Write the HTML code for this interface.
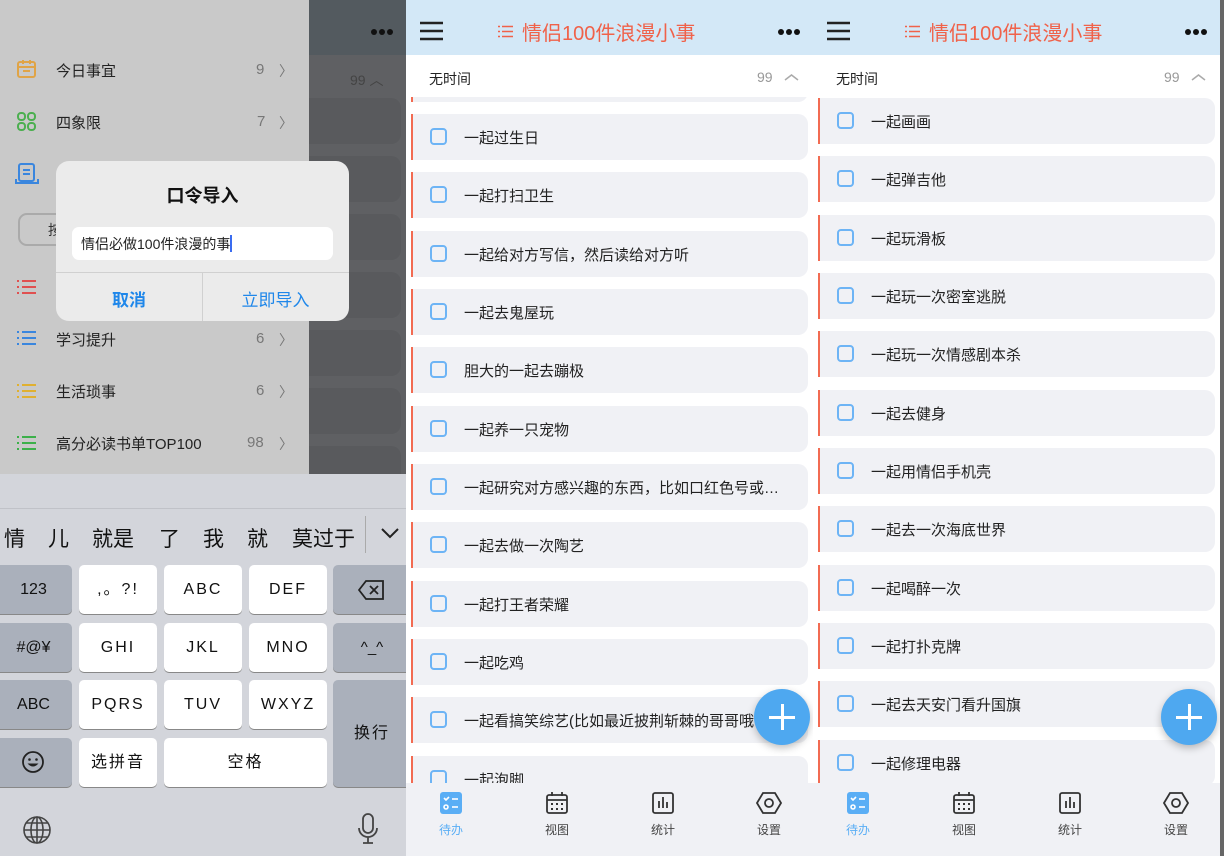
<!DOCTYPE html>
<html><head><meta charset="utf-8"><style>
*{margin:0;padding:0;box-sizing:border-box}
body{width:1224px;height:856px;overflow:hidden;position:relative;font-family:"Liberation Sans","Noto Sans CJK SC",sans-serif;background:#fff}
.a{position:absolute}
.panel{position:absolute;top:0;height:856px;overflow:hidden;background:#fff}
.hdr{position:absolute;left:0;top:0;width:100%;height:55px;background:#d3e8f7}
.title{position:absolute;top:17px;font-size:20px;color:#f0624a;white-space:nowrap}
.card{position:absolute;left:5px;width:397px;height:46px;background:#f0f1f5;border-radius:0 10px 10px 0;border-left:2px solid #f26b52}
.card .cb{position:absolute;left:17px;top:14px;width:17px;height:17px;border:2px solid #6db4f5;border-radius:4px}
.card .t{position:absolute;left:51px;top:13px;font-size:15px;color:#222;white-space:nowrap;width:330px;overflow:hidden;text-overflow:ellipsis}
.tab{position:absolute;top:783px;left:0;width:100%;height:73px;background:#f0f1f5}
.tab .l{position:absolute;top:38px;font-size:12px;color:#444;width:40px;text-align:center}
.fab{position:absolute;width:56px;height:56px;border-radius:50%;background:#4ea8f0;box-shadow:0 3px 8px rgba(0,0,0,.25);top:689px}
.fab:before{content:"";position:absolute;left:15px;top:27px;width:26px;height:2.5px;background:#fff}
.fab:after{content:"";position:absolute;left:27px;top:15px;width:2.5px;height:26px;background:#fff}
.key{position:absolute;height:49px;background:#fff;border-radius:5px;box-shadow:0 1px 0 #888;font-size:16px;text-align:center;line-height:49px;color:#111;letter-spacing:2px}
.gk{background:#aab0bb}
.side{position:absolute;left:56px;font-size:15px;color:#222}
.num{position:absolute;font-size:15px;color:#777}
.chev{position:absolute;font-size:14px;color:#777}
.sec{position:absolute;left:0;top:55px;width:100%;height:42px;background:#fff}
</style></head><body>

<!-- LEFT PANEL -->
<div class="panel" style="left:0;width:406px;background:#c9c9c9">
  <div class="a" style="left:309px;top:0;width:97px;height:474px;background:#5f6063"></div>
  <div class="a" style="left:309px;top:0;width:97px;height:55px;background:#535a5f"></div>
  <svg class="a" style="left:370px;top:28px" width="24" height="8"><g fill="#111"><circle cx="4" cy="4" r="3"/><circle cx="12" cy="4" r="3"/><circle cx="20" cy="4" r="3"/></g></svg>
  <div class="a" style="left:350px;top:70px;color:#444;font-size:14px">99 ︿</div>
  <div class="a" style="left:309px;top:98px;width:92px;height:46px;background:#595a5d;border-radius:0 10px 10px 0"></div>
  <div class="a" style="left:309px;top:156px;width:92px;height:46px;background:#595a5d;border-radius:0 10px 10px 0"></div>
  <div class="a" style="left:309px;top:214px;width:92px;height:46px;background:#595a5d;border-radius:0 10px 10px 0"></div>
  <div class="a" style="left:309px;top:272px;width:92px;height:46px;background:#595a5d;border-radius:0 10px 10px 0"></div>
  <div class="a" style="left:309px;top:330px;width:92px;height:46px;background:#595a5d;border-radius:0 10px 10px 0"></div>
  <div class="a" style="left:309px;top:388px;width:92px;height:46px;background:#595a5d;border-radius:0 10px 10px 0"></div>
  <div class="a" style="left:309px;top:446px;width:92px;height:28px;background:#595a5d;border-radius:0 10px 0 0"></div>

  <svg class="a" style="left:16px;top:59px" width="22" height="20"><rect x="2" y="3" width="17" height="15" rx="2" fill="none" stroke="#e0a447" stroke-width="2"/><line x1="2" y1="8" x2="19" y2="8" stroke="#e0a447" stroke-width="2"/><line x1="7" y1="1" x2="7" y2="5" stroke="#e0a447" stroke-width="2"/><line x1="14" y1="1" x2="14" y2="5" stroke="#e0a447" stroke-width="2"/><line x1="7" y1="12" x2="14" y2="12" stroke="#e0a447" stroke-width="2"/></svg>
  <div class="side" style="top:60px">今日事宜</div><div class="num" style="left:256px;top:61px">9</div><div class="chev" style="left:279px;top:61px">〉</div>
  <svg class="a" style="left:17px;top:112px" width="20" height="20"><g fill="none" stroke="#4caf50" stroke-width="2"><rect x="1" y="1" width="7" height="7" rx="3"/><rect x="11" y="1" width="7" height="7" rx="3"/><rect x="1" y="11" width="7" height="7" rx="3"/><rect x="11" y="11" width="7" height="7" rx="3"/></g></svg>
  <div class="side" style="top:112px">四象限</div><div class="num" style="left:257px;top:113px">7</div><div class="chev" style="left:279px;top:113px">〉</div>
  <svg class="a" style="left:15px;top:162px" width="24" height="24"><rect x="4" y="2" width="15" height="17" rx="2" fill="none" stroke="#3a86de" stroke-width="2"/><line x1="8" y1="8" x2="15" y2="8" stroke="#3a86de" stroke-width="2"/><line x1="8" y1="12" x2="15" y2="12" stroke="#3a86de" stroke-width="2"/><path d="M1 17v4h22v-4" fill="none" stroke="#3a86de" stroke-width="2"/></svg>
  <div class="a" style="left:18px;top:213px;width:60px;height:33px;border:2px solid #aaa;border-radius:9px"></div>
  <div class="a" style="left:48px;top:220px;font-size:14px;color:#333">按</div>
  <svg class="a" style="left:17px;top:279px" width="20" height="16"><g stroke="#e05050" stroke-width="2"><line x1="0" y1="2" x2="2" y2="2"/><line x1="5" y1="2" x2="19" y2="2"/><line x1="0" y1="8" x2="2" y2="8"/><line x1="5" y1="8" x2="19" y2="8"/><line x1="0" y1="14" x2="2" y2="14"/><line x1="5" y1="14" x2="19" y2="14"/></g></svg>
  <svg class="a" style="left:17px;top:330px" width="20" height="16"><g stroke="#3a86de" stroke-width="2"><line x1="0" y1="2" x2="2" y2="2"/><line x1="5" y1="2" x2="19" y2="2"/><line x1="0" y1="8" x2="2" y2="8"/><line x1="5" y1="8" x2="19" y2="8"/><line x1="0" y1="14" x2="2" y2="14"/><line x1="5" y1="14" x2="19" y2="14"/></g></svg>
  <div class="side" style="top:329px">学习提升</div><div class="num" style="left:256px;top:330px">6</div><div class="chev" style="left:279px;top:330px">〉</div>
  <svg class="a" style="left:17px;top:383px" width="20" height="16"><g stroke="#e0b030" stroke-width="2"><line x1="0" y1="2" x2="2" y2="2"/><line x1="5" y1="2" x2="19" y2="2"/><line x1="0" y1="8" x2="2" y2="8"/><line x1="5" y1="8" x2="19" y2="8"/><line x1="0" y1="14" x2="2" y2="14"/><line x1="5" y1="14" x2="19" y2="14"/></g></svg>
  <div class="side" style="top:381px">生活琐事</div><div class="num" style="left:256px;top:382px">6</div><div class="chev" style="left:279px;top:382px">〉</div>
  <svg class="a" style="left:17px;top:435px" width="20" height="16"><g stroke="#3cb04a" stroke-width="2"><line x1="0" y1="2" x2="2" y2="2"/><line x1="5" y1="2" x2="19" y2="2"/><line x1="0" y1="8" x2="2" y2="8"/><line x1="5" y1="8" x2="19" y2="8"/><line x1="0" y1="14" x2="2" y2="14"/><line x1="5" y1="14" x2="19" y2="14"/></g></svg>
  <div class="side" style="top:433px">高分必读书单TOP100</div><div class="num" style="left:247px;top:434px">98</div><div class="chev" style="left:279px;top:434px">〉</div>

  <!-- dialog -->
  <div class="a" style="left:56px;top:161px;width:293px;height:160px;background:#ebebeb;border-radius:13px"></div>
  <div class="a" style="left:56px;top:182px;width:293px;text-align:center;font-size:18px;font-weight:bold;color:#111">口令导入</div>
  <div class="a" style="left:72px;top:227px;width:261px;height:33px;background:#fff;border-radius:7px;font-size:14px;padding:7px 0 0 9px;color:#222">情侣必做100件浪漫的事<span style="display:inline-block;width:2px;height:17px;background:#3a6cf0;vertical-align:-3px"></span></div>
  <div class="a" style="left:56px;top:272px;width:293px;height:1px;background:#d0d0d0"></div>
  <div class="a" style="left:202px;top:272px;width:1px;height:49px;background:#d0d0d0"></div>
  <div class="a" style="left:56px;top:286px;width:146px;text-align:center;font-size:17px;font-weight:bold;color:#1f87ea">取消</div>
  <div class="a" style="left:202px;top:286px;width:147px;text-align:center;font-size:17px;color:#1f87ea">立即导入</div>

  <!-- keyboard -->
  <div class="a" style="left:0;top:474px;width:406px;height:382px;background:#d3d5db"></div>
  <div class="a" style="left:0;top:508px;width:406px;height:1px;background:#c0c2c8"></div>
  <div class="a" style="left:4px;top:523px;font-size:21px;color:#111">情</div>
  <div class="a" style="left:48px;top:523px;font-size:21px;color:#111">儿</div>
  <div class="a" style="left:92px;top:523px;font-size:21px;color:#111">就是</div>
  <div class="a" style="left:159px;top:523px;font-size:21px;color:#111">了</div>
  <div class="a" style="left:203px;top:523px;font-size:21px;color:#111">我</div>
  <div class="a" style="left:247px;top:523px;font-size:21px;color:#111">就</div>
  <div class="a" style="left:292px;top:523px;font-size:21px;color:#111">莫过于</div>
  <div class="a" style="left:365px;top:516px;width:1px;height:37px;background:#aaa"></div>
  <svg class="a" style="left:380px;top:526px" width="20" height="14"><path d="M2 3l8 8 8-8" fill="none" stroke="#222" stroke-width="2"/></svg>

  <div class="key gk" style="left:-5px;top:565px;width:77px;letter-spacing:0">123</div>
  <div class="key" style="left:79px;top:565px;width:78px">,。?!</div>
  <div class="key" style="left:164px;top:565px;width:78px">ABC</div>
  <div class="key" style="left:249px;top:565px;width:78px">DEF</div>
  <div class="key gk" style="left:333px;top:565px;width:78px"></div>
  <svg class="a" style="left:358px;top:579px" width="28" height="22"><path d="M8 2h17v18H8L1 11z" fill="none" stroke="#222" stroke-width="1.8"/><path d="M12 7l8 8M20 7l-8 8" stroke="#222" stroke-width="1.8"/></svg>
  <div class="key gk" style="left:-5px;top:623px;width:77px;letter-spacing:0">#@¥</div>
  <div class="key" style="left:79px;top:623px;width:78px">GHI</div>
  <div class="key" style="left:164px;top:623px;width:78px">JKL</div>
  <div class="key" style="left:249px;top:623px;width:78px">MNO</div>
  <div class="key gk" style="left:333px;top:623px;width:78px;letter-spacing:0;font-size:15px">^_^</div>
  <div class="key gk" style="left:-5px;top:680px;width:77px;letter-spacing:0">ABC</div>
  <div class="key" style="left:79px;top:680px;width:78px">PQRS</div>
  <div class="key" style="left:164px;top:680px;width:78px">TUV</div>
  <div class="key" style="left:249px;top:680px;width:78px">WXYZ</div>
  <div class="key gk" style="left:333px;top:680px;width:78px;height:107px;line-height:107px">换行</div>
  <div class="key gk" style="left:-5px;top:738px;width:77px"></div>
  <svg class="a" style="left:21px;top:750px" width="24" height="24"><circle cx="12" cy="12" r="10" fill="none" stroke="#222" stroke-width="1.8"/><circle cx="8.5" cy="9.5" r="1.3" fill="#222"/><circle cx="15.5" cy="9.5" r="1.3" fill="#222"/><path d="M6.5 13.5q5.5 6 11 0z" fill="#222"/></svg>
  <div class="key" style="left:79px;top:738px;width:78px">选拼音</div>
  <div class="key" style="left:164px;top:738px;width:163px">空格</div>
  <svg class="a" style="left:22px;top:815px" width="30" height="30"><g fill="none" stroke="#444" stroke-width="1.6"><circle cx="15" cy="15" r="13"/><ellipse cx="15" cy="15" rx="6" ry="13"/><line x1="2" y1="15" x2="28" y2="15"/><line x1="15" y1="2" x2="15" y2="28"/><path d="M4 8h22M4 22h22"/></g></svg>
  <svg class="a" style="left:356px;top:813px" width="24" height="32"><g fill="none" stroke="#444" stroke-width="1.8"><rect x="7" y="1" width="10" height="19" rx="5"/><path d="M3 15a9 9 0 0 0 18 0M12 24v6M7 30h10"/></g></svg>
</div>

<!-- MIDDLE PANEL -->
<div class="panel" style="left:406px;width:407px">
  <div class="card" style="top:60px;height:42px;border-radius:0 0 10px 0"></div>
  <div class="sec"></div>
  <div class="hdr"></div>
  <svg class="a" style="left:14px;top:21px" width="23" height="20"><g stroke="#222" stroke-width="2.4"><line x1="0" y1="2" x2="23" y2="2"/><line x1="0" y1="10" x2="23" y2="10"/><line x1="0" y1="18" x2="23" y2="18"/></g></svg>
  <svg class="a" style="left:92px;top:25px" width="16" height="13"><g stroke="#f0624a" stroke-width="1.5"><line x1="0" y1="1.5" x2="2" y2="1.5"/><line x1="4" y1="1.5" x2="15" y2="1.5"/><line x1="0" y1="6.5" x2="2" y2="6.5"/><line x1="4" y1="6.5" x2="15" y2="6.5"/><line x1="0" y1="11.5" x2="2" y2="11.5"/><line x1="4" y1="11.5" x2="15" y2="11.5"/></g></svg>
  <div class="title" style="left:116px">情侣100件浪漫小事</div>
  <svg class="a" style="left:371px;top:28px" width="24" height="8"><g fill="#111"><circle cx="4" cy="4" r="3"/><circle cx="12" cy="4" r="3"/><circle cx="20" cy="4" r="3"/></g></svg>
  <div class="a" style="left:23px;top:69px;font-size:14px;color:#222">无时间</div>
  <div class="a" style="left:351px;top:69px;font-size:14px;color:#999">99</div>
  <svg class="a" style="left:378px;top:73px" width="15" height="8"><path d="M1 7l6.5-5 6.5 5" fill="none" stroke="#aaa" stroke-width="1.5"/></svg>
  <div class="card" style="top:114px"><div class="cb"></div><div class="t">一起过生日</div></div>
  <div class="card" style="top:172px"><div class="cb"></div><div class="t">一起打扫卫生</div></div>
  <div class="card" style="top:231px"><div class="cb"></div><div class="t">一起给对方写信，然后读给对方听</div></div>
  <div class="card" style="top:289px"><div class="cb"></div><div class="t">一起去鬼屋玩</div></div>
  <div class="card" style="top:347px"><div class="cb"></div><div class="t">胆大的一起去蹦极</div></div>
  <div class="card" style="top:406px"><div class="cb"></div><div class="t">一起养一只宠物</div></div>
  <div class="card" style="top:464px"><div class="cb"></div><div class="t">一起研究对方感兴趣的东西，比如口红色号或…</div></div>
  <div class="card" style="top:522px"><div class="cb"></div><div class="t">一起去做一次陶艺</div></div>
  <div class="card" style="top:581px"><div class="cb"></div><div class="t">一起打王者荣耀</div></div>
  <div class="card" style="top:639px"><div class="cb"></div><div class="t">一起吃鸡</div></div>
  <div class="card" style="top:697px"><div class="cb"></div><div class="t" style="text-overflow:clip">一起看搞笑综艺(比如最近披荆斩棘的哥哥哦</div></div>
  <div class="card" style="top:756px"><div class="cb"></div><div class="t">一起泡脚</div></div>
  <div class="fab" style="left:348px"></div>
  <div class="tab">
    <svg class="a" style="left:34px;top:9px" width="22" height="22"><rect width="22" height="22" rx="3" fill="#5aaef5"/><g stroke="#fff" stroke-width="1.6" fill="none"><path d="M4 6l2 2 3-3"/><line x1="12" y1="7" x2="18" y2="7"/><circle cx="6" cy="15" r="2"/><line x1="12" y1="15" x2="18" y2="15"/></g></svg>
    <div class="l" style="left:25px;color:#5aaef5">待办</div>
    <svg class="a" style="left:139px;top:8px" width="24" height="24"><g fill="none" stroke="#333" stroke-width="1.8"><rect x="2" y="4" width="20" height="18" rx="2"/><line x1="2" y1="9" x2="22" y2="9"/><line x1="7" y1="1" x2="7" y2="5"/><line x1="17" y1="1" x2="17" y2="5"/></g><g fill="#333"><rect x="6" y="12" width="2" height="2"/><rect x="11" y="12" width="2" height="2"/><rect x="16" y="12" width="2" height="2"/><rect x="6" y="17" width="2" height="2"/><rect x="11" y="17" width="2" height="2"/><rect x="16" y="17" width="2" height="2"/></g></svg>
    <div class="l" style="left:131px">视图</div>
    <svg class="a" style="left:245px;top:8px" width="24" height="24"><g fill="none" stroke="#333" stroke-width="1.8"><rect x="2" y="2" width="20" height="20" rx="2"/><line x1="8" y1="10" x2="8" y2="17"/><line x1="12" y1="6" x2="12" y2="17"/><line x1="16" y1="11" x2="16" y2="17"/></g></svg>
    <div class="l" style="left:237px">统计</div>
    <svg class="a" style="left:350px;top:8px" width="26" height="24"><g fill="none" stroke="#333" stroke-width="1.8"><path d="M7 2h12l6 10-6 10H7L1 12z"/><circle cx="13" cy="12" r="4"/></g></svg>
    <div class="l" style="left:343px">设置</div>
  </div>
</div>

<!-- RIGHT PANEL -->
<div class="panel" style="left:813px;width:411px">
  <div class="hdr"></div>
  <svg class="a" style="left:14px;top:21px" width="23" height="20"><g stroke="#222" stroke-width="2.4"><line x1="0" y1="2" x2="23" y2="2"/><line x1="0" y1="10" x2="23" y2="10"/><line x1="0" y1="18" x2="23" y2="18"/></g></svg>
  <svg class="a" style="left:92px;top:25px" width="16" height="13"><g stroke="#f0624a" stroke-width="1.5"><line x1="0" y1="1.5" x2="2" y2="1.5"/><line x1="4" y1="1.5" x2="15" y2="1.5"/><line x1="0" y1="6.5" x2="2" y2="6.5"/><line x1="4" y1="6.5" x2="15" y2="6.5"/><line x1="0" y1="11.5" x2="2" y2="11.5"/><line x1="4" y1="11.5" x2="15" y2="11.5"/></g></svg>
  <div class="title" style="left:116px">情侣100件浪漫小事</div>
  <svg class="a" style="left:371px;top:28px" width="24" height="8"><g fill="#111"><circle cx="4" cy="4" r="3"/><circle cx="12" cy="4" r="3"/><circle cx="20" cy="4" r="3"/></g></svg>
  <div class="a" style="left:23px;top:69px;font-size:14px;color:#222">无时间</div>
  <div class="a" style="left:351px;top:69px;font-size:14px;color:#999">99</div>
  <svg class="a" style="left:378px;top:73px" width="15" height="8"><path d="M1 7l6.5-5 6.5 5" fill="none" stroke="#aaa" stroke-width="1.5"/></svg>
  <div class="card" style="top:98px"><div class="cb"></div><div class="t">一起画画</div></div>
  <div class="card" style="top:156px"><div class="cb"></div><div class="t">一起弹吉他</div></div>
  <div class="card" style="top:215px"><div class="cb"></div><div class="t">一起玩滑板</div></div>
  <div class="card" style="top:273px"><div class="cb"></div><div class="t">一起玩一次密室逃脱</div></div>
  <div class="card" style="top:331px"><div class="cb"></div><div class="t">一起玩一次情感剧本杀</div></div>
  <div class="card" style="top:390px"><div class="cb"></div><div class="t">一起去健身</div></div>
  <div class="card" style="top:448px"><div class="cb"></div><div class="t">一起用情侣手机壳</div></div>
  <div class="card" style="top:506px"><div class="cb"></div><div class="t">一起去一次海底世界</div></div>
  <div class="card" style="top:565px"><div class="cb"></div><div class="t">一起喝醉一次</div></div>
  <div class="card" style="top:623px"><div class="cb"></div><div class="t">一起打扑克牌</div></div>
  <div class="card" style="top:681px"><div class="cb"></div><div class="t">一起去天安门看升国旗</div></div>
  <div class="card" style="top:740px"><div class="cb"></div><div class="t">一起修理电器</div></div>
  <div class="fab" style="left:348px"></div>
  <div class="tab">
    <svg class="a" style="left:34px;top:9px" width="22" height="22"><rect width="22" height="22" rx="3" fill="#5aaef5"/><g stroke="#fff" stroke-width="1.6" fill="none"><path d="M4 6l2 2 3-3"/><line x1="12" y1="7" x2="18" y2="7"/><circle cx="6" cy="15" r="2"/><line x1="12" y1="15" x2="18" y2="15"/></g></svg>
    <div class="l" style="left:25px;color:#5aaef5">待办</div>
    <svg class="a" style="left:139px;top:8px" width="24" height="24"><g fill="none" stroke="#333" stroke-width="1.8"><rect x="2" y="4" width="20" height="18" rx="2"/><line x1="2" y1="9" x2="22" y2="9"/><line x1="7" y1="1" x2="7" y2="5"/><line x1="17" y1="1" x2="17" y2="5"/></g><g fill="#333"><rect x="6" y="12" width="2" height="2"/><rect x="11" y="12" width="2" height="2"/><rect x="16" y="12" width="2" height="2"/><rect x="6" y="17" width="2" height="2"/><rect x="11" y="17" width="2" height="2"/><rect x="16" y="17" width="2" height="2"/></g></svg>
    <div class="l" style="left:131px">视图</div>
    <svg class="a" style="left:245px;top:8px" width="24" height="24"><g fill="none" stroke="#333" stroke-width="1.8"><rect x="2" y="2" width="20" height="20" rx="2"/><line x1="8" y1="10" x2="8" y2="17"/><line x1="12" y1="6" x2="12" y2="17"/><line x1="16" y1="11" x2="16" y2="17"/></g></svg>
    <div class="l" style="left:237px">统计</div>
    <svg class="a" style="left:350px;top:8px" width="26" height="24"><g fill="none" stroke="#333" stroke-width="1.8"><path d="M7 2h12l6 10-6 10H7L1 12z"/><circle cx="13" cy="12" r="4"/></g></svg>
    <div class="l" style="left:343px">设置</div>
  </div>
  <div class="a" style="left:407px;top:0;width:4px;height:856px;background:#666"></div>
</div>
</body></html>
